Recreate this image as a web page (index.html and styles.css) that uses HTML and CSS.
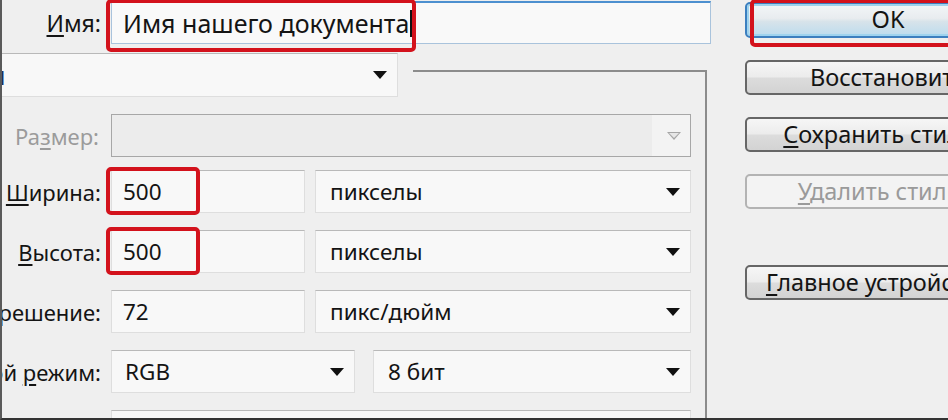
FILE: index.html
```html
<!DOCTYPE html>
<html lang="ru">
<head>
<meta charset="utf-8">
<title>Новый документ</title>
<link rel="stylesheet" href="styles.css">
</head>
<body>
<div class="dialog">
  <div class="main">
    <div class="name-row">
      <div class="lbl lbl-name"><span><u>И</u>мя:</span></div>
      <div class="name-field">
        <span>Имя нашего документа</span><span class="caret"></span>
        <div class="annot annot-name"></div>
      </div>
    </div>
    <div class="preset-row">
      <div class="select preset"><span class="cut">й</span><span class="arrow"></span></div>
      <div class="group-top"></div>
    </div>
    <div class="group">
      <div class="row row-size">
        <div class="lbl disabled"><span>Ра<u>з</u>мер:</span></div>
        <div class="select disabled-select"><span class="arrow-light"></span></div>
      </div>
      <div class="row">
        <div class="lbl"><span><u>Ш</u>ирина:</span></div>
        <div class="pair">
          <div class="field">500<div class="annot annot-num"></div></div>
          <div class="select">пикселы<span class="arrow"></span></div>
        </div>
      </div>
      <div class="row">
        <div class="lbl"><span><u>В</u>ысота:</span></div>
        <div class="pair">
          <div class="field">500<div class="annot annot-num"></div></div>
          <div class="select">пикселы<span class="arrow"></span></div>
        </div>
      </div>
      <div class="row">
        <div class="lbl"><span>Разрешение:</span></div>
        <div class="pair">
          <div class="field">72</div>
          <div class="select">пикс/дюйм<span class="arrow"></span></div>
        </div>
      </div>
      <div class="row">
        <div class="lbl"><span>Цветовой <u>р</u>ежим:</span></div>
        <div class="pair pair-mode">
          <div class="select">RGB<span class="arrow"></span></div>
          <div class="select">8 бит<span class="arrow"></span></div>
        </div>
      </div>
      <div class="row">
        <div class="lbl"></div>
        <div class="select"></div>
      </div>
    </div>
  </div>
  <div class="side">
    <div class="btn btn-ok">OK<div class="annot annot-ok"></div></div>
    <div class="btn">Восстановить</div>
    <div class="btn"><span><u>С</u>охранить стиль...</span></div>
    <div class="btn btn-disabled"><span><u>У</u>далить стиль...</span></div>
    <div class="btn btn-device"><span><u>Г</u>лавное устройство...</span></div>
  </div>
</div>
</body>
</html>
```

FILE: styles.css
```css
* { box-sizing: border-box; }
html, body { margin: 0; padding: 0; }
body {
  background: #efefef;
  font-family: "Noto Sans", "Open Sans", sans-serif;
  font-size: 22.5px;
  color: #141414;
  width: 948px;
  height: 420px;
  overflow: hidden;
}
u { text-decoration-thickness: 2px; text-underline-offset: 3px; }

.dialog {
  display: flex;
  width: 948px;
  height: 420px;
  border-left: 2px solid #5a5a5a;
  border-bottom: 2px solid #333;
  overflow: hidden;
}
.main {
  width: 709px;
  flex: none;
  display: flex;
  flex-direction: column;
  min-height: 0;
}

.lbl {
  display: flex;
  justify-content: flex-end;
  align-items: center;
  white-space: nowrap;
  overflow: hidden;
  font-size: 22px;
}
.lbl.disabled { color: #9b9b9b; padding-right: 2px; }
.lbl-name { font-size: 23px; }

/* name row */
.name-row {
  flex: none;
  display: grid;
  grid-template-columns: 99px 600px;
  column-gap: 10px;
  height: 53px;
  padding-top: 1px;
  align-items: start;
}
.name-row .lbl { height: 44px; }
.name-field {
  position: relative;
  height: 43px;
  background: #f9f9f9;
  border: 1px solid #a9c3dc;
  border-top: 2px solid #4d90d0;
  padding-left: 11px;
  display: flex;
  align-items: center;
  white-space: nowrap;
  font-size: 25px;
}
.caret {
  display: inline-block;
  width: 2px;
  height: 27px;
  background: #111;
  margin-left: 1px;
}

/* preset row + group box */
.preset-row {
  flex: none;
  display: flex;
  height: 44px;
}
.select.preset {
  width: 396px;
  height: 44px;
  padding-left: 0;
  border-left: none;
  overflow: hidden;
  font-size: 25px;
}
.cut {
  color: #1d2d5c;
  margin-left: -12px;
}
.group-top {
  flex: 1;
  margin: 17px 4px 0 15px;
  border-top: 2px solid #8c8c8c;
  border-right: 2px solid #8c8c8c;
}
.group {
  flex: 1;
  min-height: 0;
  overflow: hidden;
  margin-right: 4px;
  border-right: 2px solid #8c8c8c;
  padding: 17px 14px 0 0;
  display: flex;
  flex-direction: column;
  gap: 17px;
}
.row {
  display: grid;
  grid-template-columns: 99px 1fr;
  column-gap: 10px;
  height: 43px;
  flex: none;
}
.row-size { margin-bottom: -4px; }
.pair {
  display: grid;
  grid-template-columns: 194px 1fr;
  column-gap: 10px;
}
.pair-mode {
  grid-template-columns: 244px 1fr;
  column-gap: 18px;
}

.field, .select {
  position: relative;
  height: 43px;
  background: #f8f8f8;
  border: 1px solid #dedede;
  border-top: 1px solid #b9b9b9;
  display: flex;
  align-items: center;
  white-space: nowrap;
}
.field { padding-left: 11px; }
.select { padding-left: 14px; }
.pair-mode .select:first-child { padding-left: 13px; }
.arrow {
  position: absolute;
  right: 10px;
  top: 50%;
  margin-top: -4px;
  width: 0;
  height: 0;
  border-left: 7px solid transparent;
  border-right: 7px solid transparent;
  border-top: 8px solid #111;
}
.disabled-select {
  background: linear-gradient(to right, #ececec 0, #ececec 540px, #f3f3f3 540px);
  border: 1px solid #a7a7a7;
}
.arrow-light {
  position: absolute;
  right: 9px;
  top: 50%;
  margin-top: -4px;
  width: 14px;
  height: 8px;
}
.arrow-light::before, .arrow-light::after {
  content: "";
  position: absolute;
  left: 0;
  top: 0;
  width: 0;
  height: 0;
  border-left: 7px solid transparent;
  border-right: 7px solid transparent;
  border-top: 8px solid #a5a5a5;
}
.arrow-light::after {
  left: 2px;
  top: 1px;
  border-left-width: 5px;
  border-right-width: 5px;
  border-top: 5px solid #e6e6e6;
}

/* red annotations */
.annot {
  position: absolute;
  border: 4px solid #d3121c;
  border-radius: 5px;
  pointer-events: none;
}
.annot-name { left: -6px; top: -4px; width: 310px; height: 53px; }
.annot-num { left: -6px; top: -4px; width: 94px; height: 48px; }
.annot-ok { left: 3px; top: -5px; width: 260px; height: 48px; }

/* buttons */
.side {
  flex: 1;
  margin-left: 34px;
  display: flex;
  flex-direction: column;
  padding-top: 2px;
  gap: 22px;
  font-size: 23.5px;
}
.btn {
  position: relative;
  flex: none;
  width: 286px;
  height: 35px;
  border: 2px solid #666;
  border-radius: 5px;
  background: linear-gradient(#f6f6f6 0%, #ececec 48%, #dcdcdc 52%, #d3d3d3 100%);
  display: flex;
  align-items: center;
  justify-content: center;
  white-space: nowrap;
  line-height: 1;
}
.btn-ok {
  height: 36px;
  border-color: #3c7fbf;
  background: linear-gradient(#f3f6f8 0%, #e8ecef 45%, #d7e3ea 55%, #bcdcee 100%);
  box-shadow: inset 0 0 0 2px #9fd3ee;
}
.btn-disabled {
  border-color: #b3b3b3;
  background: #f3f3f3;
  color: #9a9a9a;
}
.btn-device { margin-top: 34px; }
```
